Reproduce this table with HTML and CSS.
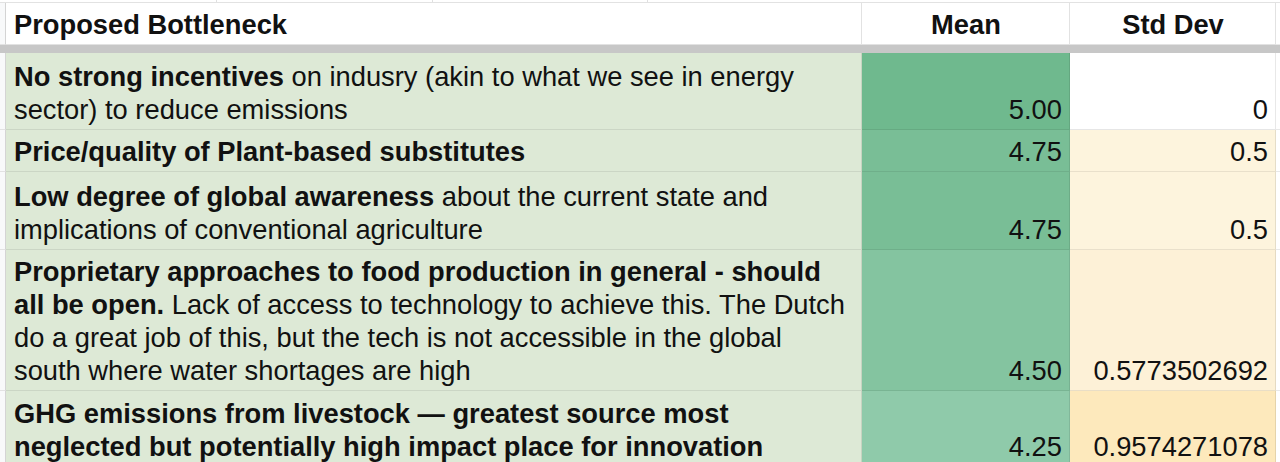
FILE: index.html
```html
<!DOCTYPE html>
<html lang="en">
<head>
<meta charset="utf-8">
<title>Proposed Bottlenecks</title>
<link rel="stylesheet" href="styles.css">
</head>
<body>
<div class="sheet">
  <div class="strip">
    <div class="strip-cell s1"></div>
    <div class="strip-cell s2"></div>
    <div class="strip-cell s3"></div>
    <div class="strip-cell s4"></div>
  </div>

  <div class="row header">
    <div class="gutter"></div>
    <div class="cell col-a"><div class="txt"><b>Proposed Bottleneck</b></div></div>
    <div class="cell col-b center"><div class="txt"><b>Mean</b></div></div>
    <div class="cell col-c center"><div class="txt"><b>Std Dev</b></div></div>
    <div class="tail"></div>
  </div>

  <div class="freeze"></div>

  <div class="row r-two">
    <div class="gutter"></div>
    <div class="cell col-a topic"><div class="txt"><span class="ln"><b>No strong incentives</b> on indusry (akin to what we see in energy</span> <span class="ln">sector) to reduce emissions</span></div></div>
    <div class="cell col-b num mean-500"><div class="txt">5.00</div></div>
    <div class="cell col-c num sd-0"><div class="txt">0</div></div>
    <div class="tail"></div>
  </div>

  <div class="row r-one">
    <div class="gutter"></div>
    <div class="cell col-a topic"><div class="txt"><b>Price/quality of Plant-based substitutes</b></div></div>
    <div class="cell col-b num mean-475"><div class="txt">4.75</div></div>
    <div class="cell col-c num sd-05"><div class="txt">0.5</div></div>
    <div class="tail"></div>
  </div>

  <div class="row r-two r-two-b">
    <div class="gutter"></div>
    <div class="cell col-a topic"><div class="txt"><span class="ln"><b>Low degree of global awareness</b> about the current state and</span> <span class="ln">implications of conventional agriculture</span></div></div>
    <div class="cell col-b num mean-475"><div class="txt">4.75</div></div>
    <div class="cell col-c num sd-05"><div class="txt">0.5</div></div>
    <div class="tail"></div>
  </div>

  <div class="row r-four">
    <div class="gutter"></div>
    <div class="cell col-a topic"><div class="txt"><span class="ln"><b>Proprietary approaches to food production in general - should</b></span> <span class="ln"><b>all be open.</b> Lack of access to technology to achieve this. The Dutch</span> <span class="ln">do a great job of this, but the tech is not accessible in the global</span> <span class="ln">south where water shortages are high</span></div></div>
    <div class="cell col-b num mean-450"><div class="txt">4.50</div></div>
    <div class="cell col-c num sd-057"><div class="txt">0.5773502692</div></div>
    <div class="tail"></div>
  </div>

  <div class="row r-last">
    <div class="gutter"></div>
    <div class="cell col-a topic"><div class="txt"><span class="ln"><b>GHG emissions from livestock — greatest source most</b></span> <span class="ln"><b>neglected but potentially high impact place for innovation</b></span></div></div>
    <div class="cell col-b num mean-425"><div class="txt">4.25</div></div>
    <div class="cell col-c num sd-095"><div class="txt">0.9574271078</div></div>
    <div class="tail"></div>
  </div>
</div>
</body>
</html>
```

FILE: styles.css
```css
html, body {
  margin: 0;
  padding: 0;
  background: #ffffff;
}

body {
  font-family: "Liberation Sans", Arial, Helvetica, sans-serif;
  color: #111111;
  overflow: hidden;
}

.sheet {
  width: 1280px;
  height: 462px;
  overflow: hidden;
}

.strip {
  display: grid;
  grid-template-columns: 217px 216px 215px 1fr;
  height: 3px;
  box-sizing: border-box;
  border-bottom: 1px solid #e2e2e2;
}

.strip-cell {
  border-right: 1px solid #e0e0e0;
}

.strip-cell.s4 {
  border-right: none;
}

.row {
  display: grid;
  grid-template-columns: 6px 856px 208px 206px 1fr;
}

.gutter {
  background: #f8f9fa;
  border-right: 1px solid #d4d4d4;
  border-bottom: 1px solid #e2e2e2;
}

.tail {
  border-bottom: 1px solid #e8e8e8;
}

.cell {
  display: flex;
  align-items: flex-end;
  box-sizing: border-box;
  padding: 0 7px 3px 8px;
  border-right: 1px solid rgba(0, 0, 0, 0.09);
  border-bottom: 1px solid rgba(0, 0, 0, 0.08);
  font-size: 27.3px;
  line-height: 33px;
  min-width: 0;
}

.txt {
  width: 100%;
}

.ln {
  display: inline-block;
  white-space: nowrap;
}

.header .cell {
  background: #ffffff;
  border-right: 1px solid #e2e2e2;
  border-bottom: 1px solid #e2e2e2;
}

.header {
  height: 42px;
}

.center .txt {
  text-align: center;
}

.num .txt {
  text-align: right;
  white-space: nowrap;
}

.freeze {
  height: 8px;
  background: #c7c7c7;
}

.topic {
  background: #dde9d6;
}

.r-two { height: 77px; }
.r-two-b { height: 78px; }
.r-one { height: 42px; }
.r-four { height: 141px; }
.r-last { height: 76px; }

.mean-500 { background: #6fb98e; }
.mean-475 { background: #79be96; }
.mean-450 { background: #84c4a0; }
.mean-425 { background: #8fcaaa; }

.sd-0 { background: #ffffff; border-bottom-color: #e6e6e6; }
.sd-05 { background: #fdf4dd; }
.sd-057 { background: #fdf1d7; }
.sd-095 { background: #fde9bc; }
```
